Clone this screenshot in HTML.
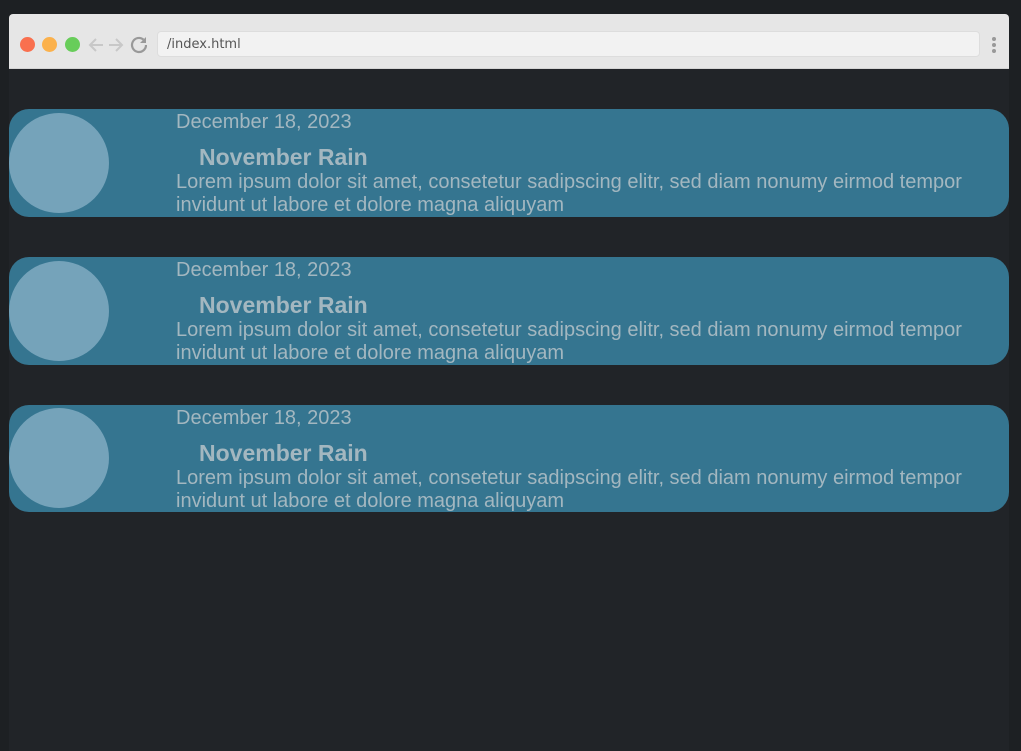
<!DOCTYPE html>
<html><head><style>
body{margin:0;width:1021px;height:751px;background:#1d2023;position:relative;overflow:hidden;font-family:"Liberation Sans",sans-serif}
.win{position:absolute;left:9px;top:14px;width:1000px;height:737px;background:#212428;border-radius:4px 4px 0 0}
.bar{position:absolute;left:0;top:0;width:1000px;height:54px;background:#e6e6e6;border-radius:4px 4px 0 0;border-bottom:1px solid #d4d4d4}
.dot{position:absolute;top:23px;width:15px;height:15px;border-radius:50%}
.url{position:absolute;left:148px;top:17px;width:823px;height:26px;background:#f2f2f2;border:1px solid #ddd;border-radius:4px;color:#555;line-height:26px;padding-left:9px;box-sizing:border-box;font-family:"DejaVu Sans",sans-serif;font-size:13px}
.card{position:absolute;left:9px;width:1000px;height:108px;background:#357590;border-radius:20px;color:#a3b7c0}
.circ{position:absolute;left:0;top:4px;width:100px;height:100px;border-radius:50%;background:#75a3ba}
.d{position:absolute;left:167px;top:2px;font-size:20px}
.t{position:absolute;left:190px;top:35px;font-size:23px;font-weight:bold}
.l{position:absolute;left:167px;top:62px;font-size:20px;line-height:23px;width:820px}
</style></head><body>
<div class="win">
<div class="bar">
<div class="dot" style="left:11px;background:#f9704f"></div>
<div class="dot" style="left:33px;background:#fbb14c"></div>
<div class="dot" style="left:56px;background:#68cd5a"></div>
<svg style="position:absolute;left:78px;top:21px" width="60" height="20" viewBox="0 0 60 20"><g fill="none" stroke="#c8c8c8" stroke-width="2"><path d="M16 10H3M9 4L3 10l6 6"/><path d="M22 10h13M29 4l6 6-6 6"/></g><path d="M59 10a7 7 0 1 1-2.5-5.4" fill="none" stroke="#999" stroke-width="2.2"/><path d="M59 2v6h-6z" fill="#999"/></svg>
<div class="url">/index.html</div>
<svg style="position:absolute;left:982px;top:22px" width="6" height="18"><circle cx="3" cy="3" r="2" fill="#999"/><circle cx="3" cy="9" r="2" fill="#999"/><circle cx="3" cy="15" r="2" fill="#999"/></svg>
</div>
</div>
<div class="card" style="top:109px"><div class="circ"></div><div class="d">December 18, 2023</div><div class="t">November Rain</div><div class="l">Lorem ipsum dolor sit amet, consetetur sadipscing elitr, sed diam nonumy eirmod tempor invidunt ut labore et dolore magna aliquyam</div></div>
<div class="card" style="top:257px"><div class="circ"></div><div class="d">December 18, 2023</div><div class="t">November Rain</div><div class="l">Lorem ipsum dolor sit amet, consetetur sadipscing elitr, sed diam nonumy eirmod tempor invidunt ut labore et dolore magna aliquyam</div></div>
<div class="card" style="top:405px;height:107px"><div class="circ" style="top:3px"></div><div class="d">December 18, 2023</div><div class="t">November Rain</div><div class="l">Lorem ipsum dolor sit amet, consetetur sadipscing elitr, sed diam nonumy eirmod tempor invidunt ut labore et dolore magna aliquyam</div></div>
</body></html>
